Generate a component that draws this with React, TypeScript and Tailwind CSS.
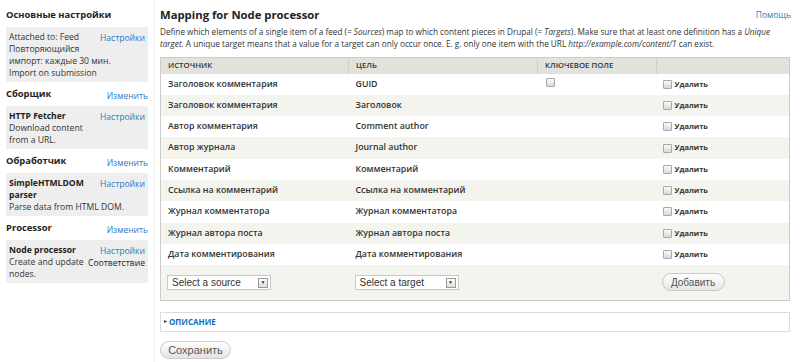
import React from "react";

type Row = { source: string; target: string; unique?: boolean };

const ROWS: Row[] = [
  { source: "Заголовок комментария", target: "GUID", unique: true },
  { source: "Заголовок комментария", target: "Заголовок" },
  { source: "Автор комментария", target: "Comment author" },
  { source: "Автор журнала", target: "Journal author" },
  { source: "Комментарий", target: "Комментарий" },
  { source: "Ссылка на комментарий", target: "Ссылка на комментарий" },
  { source: "Журнал комментатора", target: "Журнал комментатора" },
  { source: "Журнал автора поста", target: "Журнал автора поста" },
  { source: "Дата комментирования", target: "Дата комментирования" },
];

const Check = () => (
  <span className="inline-block h-[9px] w-[9px] shrink-0 rounded-[1px] border border-[#a9a9a9] bg-gradient-to-b from-[#fafafa] to-[#d9d9d9]" />
);

const SideHeading = ({ title, link, first }: { title: string; link?: string; first?: boolean }) => (
  <div className={`flex items-center justify-between ${first ? "h-[27px] pt-[3px]" : "h-[24px]"}`}>
    <span className="text-[9.4px] font-bold text-[#222]">{title}</span>
    {link && <a className="mt-[5px] text-[8.5px] text-[#2b7bc4]">{link}</a>}
  </div>
);

const SideBox = ({ lines, bold, right }: { lines: string[]; bold?: string[]; right: string[] }) => (
  <div className="flex justify-between bg-[#eeeeee] px-[3px] pb-[3px] pt-[4px] text-[8.6px] leading-[12px] text-[#333]">
    <div className="min-w-0 whitespace-nowrap">
      {bold?.map((b) => (
        <div key={b} className="font-bold text-[#222]">
          {b}
        </div>
      ))}
      {lines.map((l) => (
        <div key={l}>{l}</div>
      ))}
    </div>
    <div className="flex shrink-0 flex-col items-end whitespace-nowrap pt-[1px]">
      {right.map((r, i) => (
        <span key={r} className={i === 0 ? "text-[#2b7bc4]" : "text-[#222]"}>
          {r}
        </span>
      ))}
    </div>
  </div>
);

const SelectBox = ({ label }: { label: string }) => (
  <div className="flex h-[15px] w-[104px] items-center justify-between border border-[#c8c8c8] bg-white pl-[4px] pr-[2px] font-['Liberation_Sans',sans-serif] text-[10px] text-[#333]">
    <span>{label}</span>
    <span className="flex h-[10px] w-[10px] items-center justify-center border border-[#999] bg-gradient-to-b from-white to-[#ddd] text-[5px] leading-none text-[#333]">
      ▼
    </span>
  </div>
);

export default function App() {
  return (
    <div className="flex h-[362px] w-[800px] overflow-hidden bg-white font-['Open_Sans',sans-serif] text-[#333]">
      <aside className="w-[154px] shrink-0 pl-[6px] pr-[6px]">
        <SideHeading title="Основные настройки" first />
        <SideBox
          lines={["Attached to: Feed", "Повторяющийся", "импорт: каждые 30 мин.", "Import on submission"]}
          right={["Настройки"]}
        />
        <SideHeading title="Сборщик" link="Изменить" />
        <SideBox bold={["HTTP Fetcher"]} lines={["Download content", "from a URL."]} right={["Настройки"]} />
        <SideHeading title="Обработчик" link="Изменить" />
        <SideBox bold={["SimpleHTMLDOM", "parser"]} lines={["Parse data from HTML DOM."]} right={["Настройки"]} />
        <SideHeading title="Processor" link="Изменить" />
        <SideBox bold={["Node processor"]} lines={["Create and update", "nodes."]} right={["Настройки", "Соответствие"]} />
      </aside>

      <main className="flex-1 border-l border-[#efefef] pl-[5px] pr-[10px] pt-[8px]">
        <div className="flex items-end justify-between">
          <h1 className="text-[11.3px] font-bold leading-[14px] text-[#222]">Mapping for Node processor</h1>
          <a className="mr-[-1px] text-[8.5px] text-[#2b7bc4]">Помощь</a>
        </div>
        <p className="mt-[4px] text-[8.2px] leading-[12px] text-[#333]">
          Define which elements of a single item of a feed (= <em>Sources</em>) map to which content pieces in Drupal (={" "}
          <em>Targets</em>). Make sure that at least one definition has a <em>Unique target</em>. A unique target means
          that a value for a target can only occur once. E. g. only one item with the URL{" "}
          <em>http://example.com/content/1</em> can exist.
        </p>

        <table className="mt-[7px] w-full table-fixed border-collapse border border-[#cccccc] text-[8.8px]">
          <colgroup>
            <col className="w-[188px]" />
            <col className="w-[189px]" />
            <col className="w-[119px]" />
            <col />
          </colgroup>
          <thead>
            <tr className="h-[16px] bg-[#e1e2dc] text-left text-[7.8px] font-semibold uppercase text-[#333]">
              <th className="border-r border-[#cfd0ca] pl-[7px] font-semibold">Источник</th>
              <th className="border-r border-[#cfd0ca] pl-[7px] font-semibold">Цель</th>
              <th className="border-r border-[#cfd0ca] pl-[7px] font-semibold">Ключевое поле</th>
              <th />
            </tr>
          </thead>
          <tbody>
            {ROWS.map((r, i) => (
              <tr key={i} className={`h-[21.3px] ${i % 2 === 0 ? "bg-white" : "bg-[#f3f4ee]"} font-semibold text-[#333]`}>
                <td className="pl-[7px]">{r.source}</td>
                <td className="pl-[7px]">{r.target}</td>
                <td className="pl-[8px]">{r.unique && <Check />}</td>
                <td className="pl-[6px]">
                  <span className="flex items-center gap-[3px] text-[7.5px] font-bold text-[#333]">
                    <Check />
                    Удалить
                  </span>
                </td>
              </tr>
            ))}
            <tr className="h-[35px] bg-[#f3f4ee]">
              <td className="pl-[6px] pt-[1px]">
                <SelectBox label="Select a source" />
              </td>
              <td className="pl-[6px] pt-[1px]">
                <SelectBox label="Select a target" />
              </td>
              <td />
              <td className="pl-[5px]">
                <button className="h-[18px] w-[63px] rounded-full border border-[#c8c8c8] bg-gradient-to-b from-white to-[#e6e6e6] font-['Liberation_Sans',sans-serif] text-[10px] text-[#555]">
                  Добавить
                </button>
              </td>
            </tr>
          </tbody>
        </table>

        <div className="mt-[11px] flex h-[20px] items-center border border-[#dddddd] pl-[3px]">
          <span className="mr-[2px] text-[6px] text-[#333]">▸</span>
          <a className="text-[8px] font-bold uppercase text-[#0a6ebd]">Описание</a>
        </div>

        <button className="mt-[9px] h-[18px] w-[71px] rounded-full border border-[#cccccc] bg-gradient-to-b from-white to-[#e4e4e4] font-['Liberation_Sans',sans-serif] text-[11px] text-[#555]">
          Сохранить
        </button>
      </main>
    </div>
  );
}
